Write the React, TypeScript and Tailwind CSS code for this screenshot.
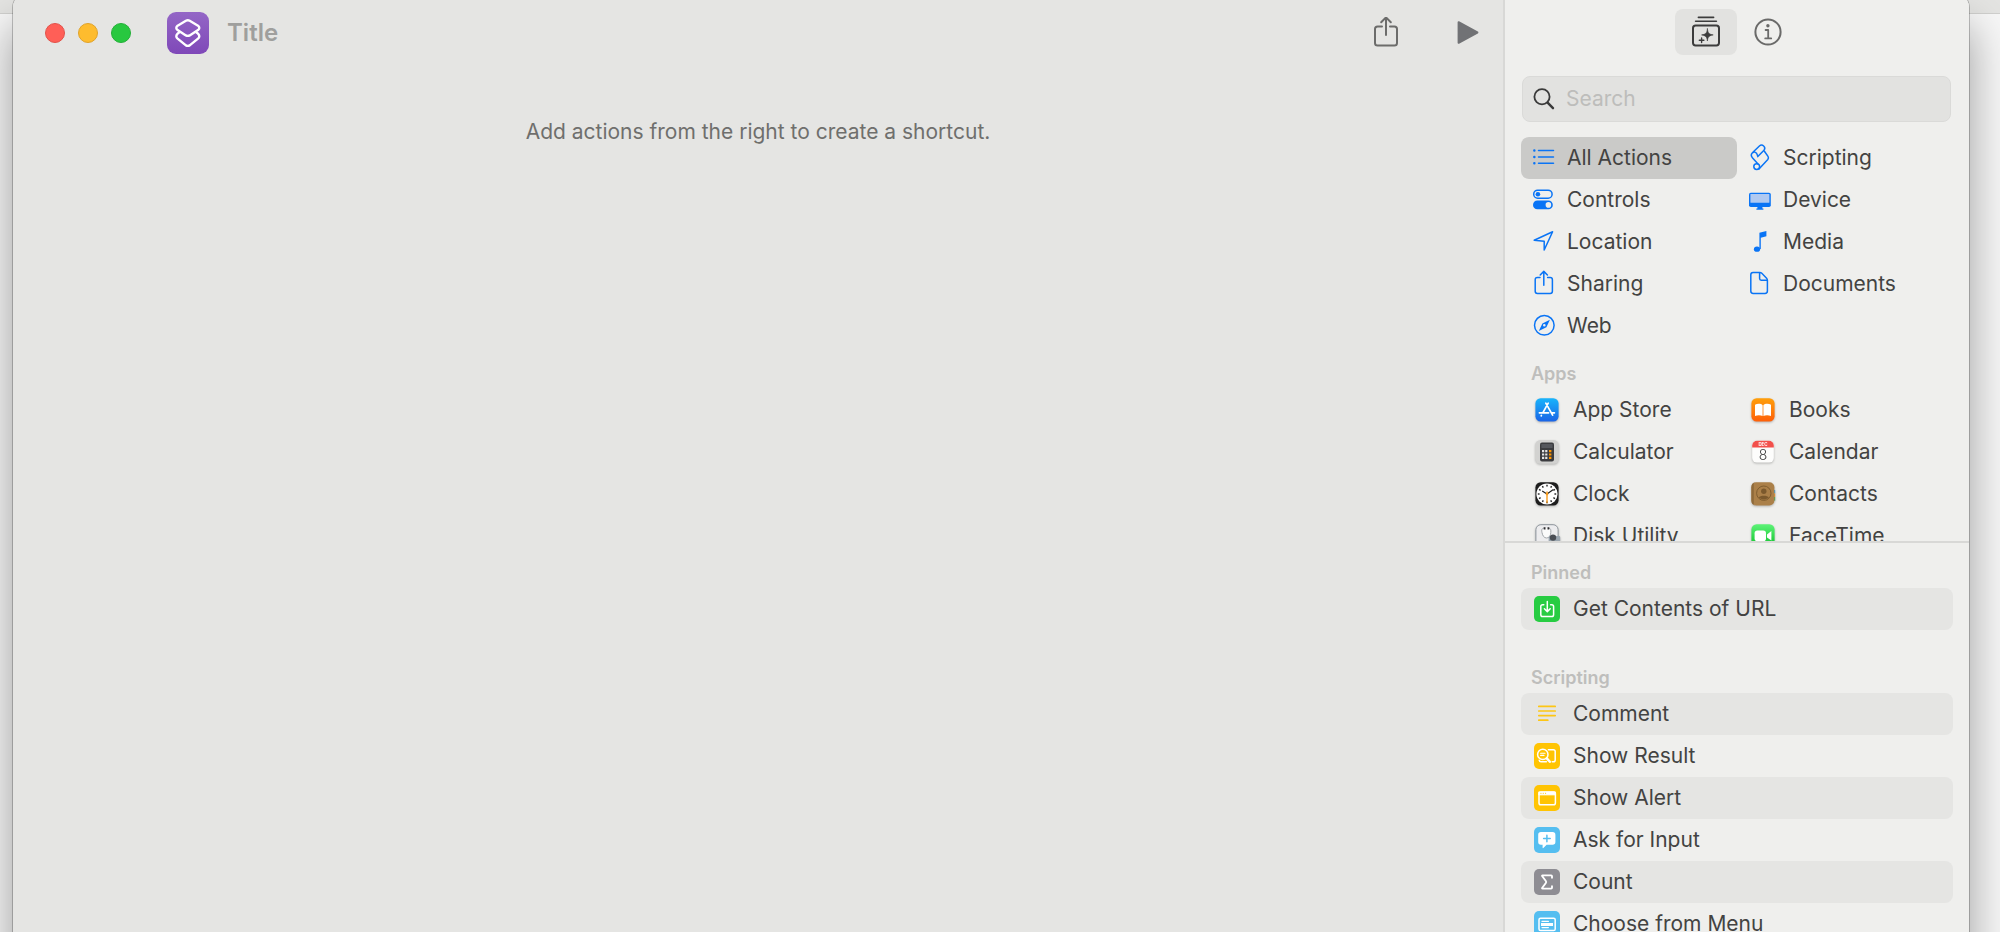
import { useState } from "react";
import type { ReactNode } from "react";
import { Sigma } from "lucide-react";

interface Entry {
  label: string;
  icon: ReactNode;
}

/* ---------- Category glyphs ---------- */

function Glyph({ children }: { children: ReactNode }) {
  return (
    <svg
      viewBox="0 0 22 28"
      className="w-[22px] h-7 shrink-0 overflow-visible"
      fill="none"
      stroke="#0a74f5"
      strokeWidth="1.5"
      strokeLinecap="round"
      strokeLinejoin="round"
      aria-hidden="true"
    >
      {children}
    </svg>
  );
}

const categories: Entry[] = [
  {
    label: "All Actions",
    icon: (
      <Glyph>
        <path d="M5.5 6.5H20.5M5.5 13H20.5M5.5 19.3H20.5" />
        <path d="M1.3 6.5h.1M1.3 13h.1M1.3 19.3h.1" strokeWidth="2.4" />
      </Glyph>
    ),
  },
  {
    label: "Scripting",
    icon: (
      <Glyph>
        <path d="M8.8 19.8L3.6 14C1.8 12 1.8 10.4 3.4 8.8L10.4 2C13.2 -.4 17.4 3 15 6.2L8.8 12.6L8.2 10.6C7.6 8.4 5.4 7.4 3.8 8.6" />
        <path d="M15.4 7.2L19 12.4Q20 14 18.8 15.4L10 25" />
        <circle cx="7.7" cy="22.6" r="2.9" />
      </Glyph>
    ),
  },
  {
    label: "Controls",
    icon: (
      <Glyph>
        <rect x=".7" y="4.2" width="18.4" height="8" rx="4" />
        <circle cx="4.9" cy="8.2" r="2.3" fill="#0a74f5" stroke="none" />
        <rect x="0" y="14.6" width="19.8" height="8.6" rx="4.3" fill="#0a74f5" stroke="none" />
        <circle cx="15.4" cy="18.9" r="2.8" fill="#efefed" stroke="none" />
      </Glyph>
    ),
  },
  {
    label: "Device",
    icon: (
      <Glyph>
        <rect x="0" y="6.7" width="21.8" height="14.4" rx="1.8" fill="#0a74f5" stroke="none" />
        <rect x="1.4" y="8" width="19" height="8.8" rx=".6" fill="#b0c9f1" stroke="none" />
        <path d="M8.4 21h5v1.6h1v1.2H7.4v-1.2h1z" fill="#0a74f5" stroke="none" />
      </Glyph>
    ),
  },
  {
    label: "Location",
    icon: (
      <Glyph>
        <path d="M1.2 12.3L19.6 3.7L11.2 22V13.2Z" />
      </Glyph>
    ),
  },
  {
    label: "Media",
    icon: (
      <Glyph>
        <ellipse cx="8" cy="21.2" rx="3.1" ry="2.6" fill="#0a74f5" stroke="none" />
        <path d="M10.4 21V4.8L17.4 3V8.2L11.8 9.8V21Z" fill="#0a74f5" stroke="none" />
      </Glyph>
    ),
  },
  {
    label: "Sharing",
    icon: (
      <Glyph>
        <path d="M7 7.5H4.4C2.9 7.5 2.2 8.2 2.2 9.7V21.2C2.2 22.7 2.9 23.4 4.4 23.4H17.2C18.7 23.4 19.4 22.7 19.4 21.2V9.7C19.4 8.2 18.7 7.5 17.2 7.5H14.6" />
        <path d="M10.8 15.3V1.6M7.2 5L10.8 1.4L14.4 5" />
      </Glyph>
    ),
  },
  {
    label: "Documents",
    icon: (
      <Glyph>
        <path d="M4 2.5H10.8C11.6 2.5 12.2 2.7 12.8 3.3L17.6 8.2C18.2 8.8 18.4 9.4 18.4 10.2V21C18.4 22.6 17.6 23.4 16 23.4H4.2C2.6 23.4 1.8 22.6 1.8 21V4.8C1.8 3.3 2.6 2.5 4 2.5Z" />
        <path d="M10.6 2.7V8.6C10.6 9.7 11 10.2 12.2 10.2H18" />
      </Glyph>
    ),
  },
  {
    label: "Web",
    icon: (
      <Glyph>
        <circle cx="11.3" cy="13.3" r="9.8" />
        <path
          d="M16.9 7.8L13.4 15.2L5.8 18.9L9.4 11.4ZM11.3 12A1.3 1.3 0 1 0 11.3 14.6A1.3 1.3 0 1 0 11.3 12Z"
          fill="#0a74f5"
          fillRule="evenodd"
          stroke="none"
        />
      </Glyph>
    ),
  },
];

/* ---------- App icons ---------- */

function AppIcon({ children }: { children: ReactNode }) {
  return (
    <svg viewBox="0 0 26 26" className="size-[26px] shrink-0 overflow-visible drop-shadow-[0_1px_1px_rgba(0,0,0,0.25)]" aria-hidden="true">
      {children}
    </svg>
  );
}

const ticks = [0, 30, 60, 90, 120, 150, 180, 210, 240, 270, 300, 330];

const apps: Entry[] = [
  {
    label: "App Store",
    icon: (
      <AppIcon>
        <defs>
          <linearGradient id="store" x1="0" y1="0" x2="0" y2="1">
            <stop offset="0" stopColor="#19b4fb" />
            <stop offset="1" stopColor="#1a64e6" />
          </linearGradient>
        </defs>
        <rect x="1.4" y="1.3" width="23.2" height="23.2" rx="5.2" fill="url(#store)" />
        <g stroke="#fff" strokeWidth="1.7" strokeLinecap="round" fill="none">
          <path d="M14.2 6.2L8.8 15.8M11.8 6.2L18.6 18.2M5.4 15.8H14.6M17.8 15.8H20.4M7.4 18.4L7.2 18.8" />
        </g>
      </AppIcon>
    ),
  },
  {
    label: "Books",
    icon: (
      <AppIcon>
        <defs>
          <linearGradient id="books" x1="0" y1="0" x2="0" y2="1">
            <stop offset="0" stopColor="#ff9f0a" />
            <stop offset="1" stopColor="#fe5f09" />
          </linearGradient>
        </defs>
        <rect x="1.4" y="1.3" width="23.2" height="23.2" rx="5.2" fill="url(#books)" />
        <path
          d="M12.6 8.2C11.4 6.8 7.6 6.2 5 7.8V19C7.4 17.8 10.8 17.9 12.6 19ZM13.4 8.2C14.6 6.8 18.4 6.2 21 7.8V19C18.6 17.8 15.2 17.9 13.4 19Z"
          fill="#fff"
        />
      </AppIcon>
    ),
  },
  {
    label: "Calculator",
    icon: (
      <AppIcon>
        <rect x="1.2" y="1.1" width="23.6" height="23.6" rx="5.2" fill="#d2d2d0" />
        <rect x="6" y="3.4" width="14" height="19" rx="2" fill="#3b3c3f" />
        <rect x="7.4" y="5" width="11.2" height="4" rx=".6" fill="#55575c" />
        <g fill="#e4e4e4">
          <path d="M8 11h2.2v2.2H8zM11.2 11h2.2v2.2h-2.2zM8 14.4h2.2v2.2H8zM11.2 14.4h2.2v2.2h-2.2zM8 17.8h2.2V20H8zM11.2 17.8h2.2V20h-2.2z" />
        </g>
        <path d="M15 11h2.4v2.2H15zM15 14.4h2.4v2.2H15zM15 17.8h2.4V20H15z" fill="#ff9500" />
      </AppIcon>
    ),
  },
  {
    label: "Calendar",
    icon: (
      <AppIcon>
        <defs>
          <clipPath id="page">
            <rect x="2.2" y="1.8" width="21.6" height="21.8" rx="4.8" />
          </clipPath>
        </defs>
        <g clipPath="url(#page)">
          <path d="M2 1H24V25H2Z" fill="#fdfdfc" />
          <path d="M2 1H24V8.4H2Z" fill="#f2504b" />
        </g>
        <text x="13" y="6.9" textAnchor="middle" fontFamily="Inter, sans-serif" fontSize="4.4" fontWeight="700" fill="#fff">
          DEC
        </text>
        <text x="13" y="20.9" textAnchor="middle" fontFamily="Inter, sans-serif" fontSize="14" fontWeight="300" fill="#3c3c3c">
          8
        </text>
      </AppIcon>
    ),
  },
  {
    label: "Clock",
    icon: (
      <AppIcon>
        <rect x="1.4" y="1.3" width="23.2" height="23.2" rx="5.2" fill="#1e1e1e" />
        <circle cx="13" cy="13" r="10.6" fill="#fff" />
        {ticks.map((deg) => (
          <path key={deg} d="M13 3.8V5.6" stroke="#222" strokeWidth="1.4" transform={`rotate(${deg} 13 13)`} />
        ))}
        <path d="M13 13L8.6 10.2M13 13L19 8.8" stroke="#222" strokeWidth="1.2" strokeLinecap="round" />
        <path d="M13 11V21.6" stroke="#f79a1b" strokeWidth="1.4" strokeLinecap="round" />
        <circle cx="13" cy="13" r="1.3" fill="#f79a1b" />
      </AppIcon>
    ),
  },
  {
    label: "Contacts",
    icon: (
      <AppIcon>
        <path d="M23.6 9H25.2V12.4H23.6Z" fill="#3ba0dd" />
        <path d="M23.6 12.4H25.2V16H23.6Z" fill="#e7912f" />
        <path d="M23.6 16H25.2V19.6H23.6Z" fill="#42ad5a" />
        <rect x="1.4" y="1.3" width="23" height="23.2" rx="5" fill="#ab8049" />
        <path d="M6.4 1.3C3 1.3 1.4 3 1.4 6.3V19.5C1.4 22.8 3 24.5 6.4 24.5H3.8V1.3Z" fill="#8f6a3a" />
        <circle cx="13.8" cy="12.2" r="7.2" fill="none" stroke="#7b592d" strokeWidth=".9" />
        <circle cx="13.8" cy="10.2" r="2.7" fill="#7b592d" />
        <path d="M8.8 16.6C10 14.2 17.6 14.2 18.8 16.6C17 19 10.6 19 8.8 16.6Z" fill="#7b592d" />
      </AppIcon>
    ),
  },
  {
    label: "Disk Utility",
    icon: (
      <AppIcon>
        <rect x="1.9" y="1.7" width="22.2" height="22.4" rx="5" fill="#ececee" stroke="#8d949b" strokeWidth="1" />
        <path d="M10.6 5.2C7.6 5 7.4 7 8 9.6C8.6 12.6 10 15 12.6 15C15.2 15 16.6 12.6 16.8 9.6C17 7 16.8 5 14.4 5.2" fill="#fbfbfb" stroke="#a2a6aa" strokeWidth="1" />
        <path d="M10.6 4.2V6.4M14.4 4.2V6.4" stroke="#2c2c2e" strokeWidth="1.8" />
        <rect x="14.6" y="13" width="11.6" height="6" rx="1" fill="#9aa5af" />
        <circle cx="19" cy="14.6" r="3.2" fill="#4a4e54" />
      </AppIcon>
    ),
  },
  {
    label: "FaceTime",
    icon: (
      <AppIcon>
        <defs>
          <linearGradient id="facetime" x1="0" y1="0" x2="0" y2="1">
            <stop offset="0" stopColor="#5df377" />
            <stop offset="1" stopColor="#0bbf29" />
          </linearGradient>
        </defs>
        <rect x="1.4" y="1.3" width="23.2" height="23.2" rx="5.2" fill="url(#facetime)" />
        <rect x="4.6" y="7.4" width="11.4" height="10.8" rx="2.8" fill="#fff" />
        <path d="M17 11.4L21.4 8V17.6L17 14.4Z" fill="#fff" />
      </AppIcon>
    ),
  },
];

/* ---------- Action icons ---------- */

function Tile({ color, children }: { color: string; children: ReactNode }) {
  return (
    <span className={`size-[26px] shrink-0 rounded-[5px] flex items-center justify-center ${color}`}>
      {children}
    </span>
  );
}

function TileArt({ children }: { children: ReactNode }) {
  return (
    <svg
      viewBox="0 0 26 26"
      className="size-[26px]"
      fill="none"
      stroke="#fff"
      strokeWidth="1.5"
      strokeLinecap="round"
      strokeLinejoin="round"
      aria-hidden="true"
    >
      {children}
    </svg>
  );
}

const pinned: Entry[] = [
  {
    label: "Get Contents of URL",
    icon: (
      <Tile color="bg-[#27cc42]">
        <TileArt>
          <path d="M9.8 8.8H8.6C7.4 8.8 6.8 9.4 6.8 10.6V18.8C6.8 20 7.4 20.6 8.6 20.6H17.8C19 20.6 19.6 20 19.6 18.8V10.6C19.6 9.4 19 8.8 17.8 8.8H16.6" />
          <path d="M13.3 5.6V15.4M10.4 12.8L13.3 15.6L16.2 12.8" />
        </TileArt>
      </Tile>
    ),
  },
];

const scripting: Entry[] = [
  {
    label: "Comment",
    icon: (
      <Tile color="bg-transparent">
        <TileArt>
          <path d="M4.8 5.4H21.2M4.8 10H21.2M4.8 14.6H21.2M4.8 19.2H13.8" stroke="#fdc615" strokeWidth="1.7" />
        </TileArt>
      </Tile>
    ),
  },
  {
    label: "Show Result",
    icon: (
      <Tile color="bg-[#ffc403]">
        <TileArt>
          <path d="M14.4 6.8H19.4C20.6 6.8 21.2 7.4 21.2 8.6V17C21.2 18.2 20.6 18.8 19.4 18.8H18.2M5.2 17.2C5.4 18.4 6 18.8 7 18.8H12.4" />
          <circle cx="8.8" cy="11.4" r="5.2" />
          <path d="M6.6 10.2H11M6.6 12.4H10" strokeWidth="1.1" />
          <path d="M12.8 15.4L15.8 18.8" strokeWidth="2.4" />
        </TileArt>
      </Tile>
    ),
  },
  {
    label: "Show Alert",
    icon: (
      <Tile color="bg-[#ffc403]">
        <TileArt>
          <rect x="5" y="7" width="16.4" height="12.8" rx="1.8" />
          <path d="M5 6.9H21.4V9.9H5Z" fill="#fff" strokeWidth=".8" />
          <path d="M6.9 8.2h.1M9.2 8.2h.1M11.5 8.2h.1" stroke="#ffc403" strokeWidth="1.1" />
        </TileArt>
      </Tile>
    ),
  },
  {
    label: "Ask for Input",
    icon: (
      <Tile color="bg-[#55bef0]">
        <TileArt>
          <path
            d="M7 5H18.6C20.4 5 21.4 6 21.4 7.8V15C21.4 16.8 20.4 17.8 18.6 17.8H12.6L9.6 20.8C9 21.4 8.6 21.2 8.6 20.4V17.8H7C5.2 17.8 4.2 16.8 4.2 15V7.8C4.2 6 5.2 5 7 5Z"
            fill="#fff"
            stroke="none"
          />
          <path d="M12.9 8.2V14.8M9.6 11.5H16.2" stroke="#55bef0" />
        </TileArt>
      </Tile>
    ),
  },
  {
    label: "Count",
    icon: (
      <Tile color="bg-[#8e8d93]">
        <Sigma className="size-5 text-white" strokeWidth={2.2} aria-hidden="true" />
      </Tile>
    ),
  },
  {
    label: "Choose from Menu",
    icon: (
      <Tile color="bg-[#55bef0]">
        <TileArt>
          <rect x="5" y="7.2" width="16.2" height="12.4" rx="1.6" />
          <path d="M8 10.4H14.4M8 16.6H14.4" strokeWidth="1.2" />
          <path d="M7 12H19V15H7Z" fill="#fff" stroke="none" />
        </TileArt>
      </Tile>
    ),
  },
];

/* ---------- Pieces ---------- */

function SectionTitle({ children }: { children: ReactNode }) {
  return <h2 className="h-[30px] px-[10px] flex items-center text-[18px] leading-6 font-semibold text-[#bebebc]">{children}</h2>;
}

function ActionList({ items }: { items: Entry[] }) {
  return (
    <ul>
      {items.map((item) => (
        <li key={item.label} className="rounded-lg odd:bg-[#e5e5e3]">
          <button type="button" className="w-full h-[42px] pl-[13px] flex items-center gap-[13px] text-left whitespace-nowrap">
            {item.icon}
            {item.label}
          </button>
        </li>
      ))}
    </ul>
  );
}

function Toolbar() {
  return (
    <header className="h-[66px] pl-8 pr-6 flex items-center">
      <div className="flex gap-[13px]">
        <button type="button" aria-label="Close" className="size-5 rounded-full bg-[#ff5f57] border border-[#e2524a]" />
        <button type="button" aria-label="Minimize" className="size-5 rounded-full bg-[#febc2e] border border-[#e0a32a]" />
        <button type="button" aria-label="Zoom" className="size-5 rounded-full bg-[#28c840] border border-[#24b038]" />
      </div>
      <button
        type="button"
        aria-label="Choose icon"
        className="ml-9 size-[42px] shrink-0 rounded-[9px] bg-linear-to-b from-[#9466c6] to-[#7f48b8] flex items-center justify-center"
      >
        <svg viewBox="0 0 42 42" className="size-[42px]" fill="none" stroke="#fff" strokeWidth="2.4" strokeLinejoin="round" aria-hidden="true">
          <path d="M18.9 8.8Q20.8 7.8 22.7 8.8L31 13.7Q33.6 15.9 31 18.1L22.7 23.4Q20.8 24.4 18.9 23.4L10.6 18.1Q8 15.9 10.6 13.7Z" />
          <path d="M12.6 20L10.6 21.6Q8 24.2 10.6 26.6L18.9 33.4Q20.8 34.4 22.7 33.4L31 26.6Q33.6 24.2 31 21.6L29 20" />
        </svg>
      </button>
      <input
        aria-label="Shortcut name"
        placeholder="Title"
        className="ml-[18px] flex-1 min-w-0 bg-transparent outline-none text-2xl font-semibold placeholder:text-[#9f9f9d] placeholder:opacity-100"
      />
      <div className="flex items-center gap-[58px]">
        <button type="button" aria-label="Share">
          <svg viewBox="0 0 26 32" className="w-[26px] h-8" fill="none" stroke="#6c6c6b" strokeWidth="2" strokeLinecap="round" strokeLinejoin="round" aria-hidden="true">
            <path d="M9 9.4H4.6C2.8 9.4 2 10.2 2 12V26C2 27.8 2.8 28.6 4.6 28.6H21.4C23.2 28.6 24 27.8 24 26V12C24 10.2 23.2 9.4 21.4 9.4H17" />
            <path d="M13 18V1M8.2 5.2L13 .4L17.8 5.2" />
          </svg>
        </button>
        <button type="button" aria-label="Run">
          <svg viewBox="0 0 22 24" className="w-[22px] h-6" fill="#717275" stroke="#717275" strokeWidth="2" strokeLinejoin="round" aria-hidden="true">
            <path d="M1.6 1.2L20.4 11.5L1.6 21.8Z" />
          </svg>
        </button>
      </div>
    </header>
  );
}

function Sidebar() {
  const [selected, setSelected] = useState("All Actions");

  return (
    <aside className="w-[466px] shrink-0 min-h-0 flex flex-col bg-[#efefed] border-l-2 border-[#d8d8d6] text-[21px] leading-7 text-[#434342]">
      <div className="h-16 shrink-0 flex items-center justify-center">
        <button type="button" aria-label="Action library" className="w-[62px] h-[46px] rounded-lg bg-[#e2e2e0] flex items-center justify-center">
          <svg viewBox="0 0 30 32" className="w-[30px] h-8" fill="none" stroke="#3c3c3c" strokeWidth="2" strokeLinecap="round" strokeLinejoin="round" aria-hidden="true">
            <path d="M7.4 1.4H22.6M4.6 5.2H25.4" strokeWidth="1.6" />
            <rect x="2" y="9.6" width="26" height="19.8" rx="2.6" />
            <path d="M16.4 12.8C16.9 17.2 18 18.2 22.2 18.9C18 19.6 16.9 20.8 16.4 25C15.9 20.8 14.8 19.6 10.6 18.9C14.8 18.2 15.9 17.2 16.4 12.8Z" fill="#3c3c3c" strokeWidth=".6" />
            <path d="M10.6 22V26.6M8.3 24.3H12.9" strokeWidth="1.4" />
          </svg>
        </button>
        <button type="button" aria-label="Shortcut details" className="w-[62px] h-[46px] flex items-center justify-center">
          <svg viewBox="0 0 28 28" className="size-7" fill="none" stroke="#6a6a69" strokeWidth="2" strokeLinecap="round" strokeLinejoin="round" aria-hidden="true">
            <circle cx="14" cy="14" r="12.6" />
            <path d="M11.6 12H14.2V20.2M11.2 20.4H17.2" strokeWidth="1.8" />
            <circle cx="13.9" cy="7.8" r="1.7" fill="#6a6a69" stroke="none" />
          </svg>
        </button>
      </div>

      <label className="h-[46px] mt-3 ml-[17px] mr-[18px] shrink-0 px-[10px] flex items-center gap-[11px] rounded-lg bg-[#e2e2e0] border border-[#dadad8]">
        <svg viewBox="0 0 22 26" className="w-[22px] h-[26px] shrink-0" fill="none" stroke="#3a3a3a" strokeLinecap="round" aria-hidden="true">
          <circle cx="9" cy="10.8" r="7.6" strokeWidth="1.8" />
          <path d="M14.6 16.6L20 22.2" strokeWidth="2.4" />
        </svg>
        <input type="search" aria-label="Search" placeholder="Search" className="flex-1 min-w-0 bg-transparent outline-none placeholder:text-[#bdbdbb] placeholder:opacity-100" />
      </label>

      {/* Categories and apps */}
      <div className="h-[421px] shrink-0 pt-[15px] px-4 overflow-hidden border-b-2 border-[#d8d8d6]">
        <div className="grid grid-cols-2">
          {categories.map((item) => (
            <button
              key={item.label}
              type="button"
              aria-pressed={selected === item.label}
              onClick={() => setSelected(item.label)}
              className={`h-[42px] pl-3 flex items-center gap-3 rounded-lg whitespace-nowrap ${
                selected === item.label ? "bg-[#cacac8]" : ""
              }`}
            >
              {item.icon}
              {item.label}
            </button>
          ))}
        </div>
        <div className="mt-3">
          <SectionTitle>Apps</SectionTitle>
        </div>
        <div className="grid grid-cols-2">
          {apps.map((item) => (
            <button key={item.label} type="button" className="h-[42px] pl-[13px] flex items-center gap-[13px] whitespace-nowrap">
              {item.icon}
              {item.label}
            </button>
          ))}
        </div>
      </div>

      {/* Action library */}
      <div className="flex-1 min-h-0 overflow-hidden px-4 pt-[15px]">
        <SectionTitle>Pinned</SectionTitle>
        <ActionList items={pinned} />
        <div className="mt-[33px]">
          <SectionTitle>Scripting</SectionTitle>
        </div>
        <ActionList items={scripting} />
      </div>
    </aside>
  );
}

export default function App() {
  return (
    <div className="relative h-screen overflow-hidden bg-[#f6f6f6] font-['Inter',sans-serif]">
      {/* Edge of the window behind */}
      <div className="h-[14px] bg-[#e3e3e1] border-b border-[#cfcfcd]" />
      <div className="absolute inset-0 pl-[13px] pr-[31px]">
        <div className="-mt-2 pt-2 h-[calc(100%+48px)] pb-10 flex rounded-t-2xl overflow-hidden bg-[linear-gradient(to_left,#efefed_464px,#d8d8d6_464px,#d8d8d6_466px,#e5e5e3_466px)] shadow-[0_0_0_1px_rgba(0,0,0,0.22),0_36px_40px_4px_rgba(0,0,0,0.32)]">
          <main className="flex-1 min-w-0 bg-[#e5e5e3]">
            <Toolbar />
            <p className="mt-[54px] text-[21px] leading-6 text-center text-[#6f6f6d]">
              Add actions from the right to create a shortcut.
            </p>
          </main>
          <Sidebar />
        </div>
      </div>
    </div>
  );
}
